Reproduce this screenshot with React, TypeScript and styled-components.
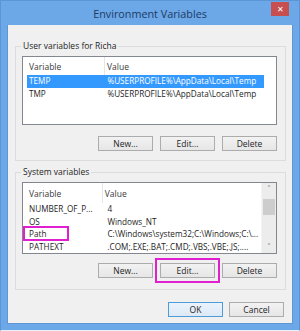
import React, { FC } from 'react';
import styled, { createGlobalStyle, css } from 'styled-components';

const GlobalStyle = createGlobalStyle`
	html, body {
		margin: 0;
		padding: 0;
		background: #6ca7e8;
	}
	body {
		font-family: 'Open Sans', 'Noto Sans', sans-serif;
		font-size: 8.5px;
		color: #1e1e1e;
	}
`;

type Row = { name: string; value: string; selected?: boolean; marked?: boolean };

const userVars: Row[] = [
	{ name: 'TEMP', value: '%USERPROFILE%\\AppData\\Local\\Temp', selected: true },
	{ name: 'TMP', value: '%USERPROFILE%\\AppData\\Local\\Temp' },
];

const systemVars: Row[] = [
	{ name: 'NUMBER_OF_P...', value: '4' },
	{ name: 'OS', value: 'Windows_NT' },
	{ name: 'Path', value: 'C:\\Windows\\system32;C:\\Windows;C:\\...', marked: true },
	{ name: 'PATHEXT', value: '.COM;.EXE;.BAT;.CMD;.VBS;.VBE;.JS;....' },
];

type ListProps = { rows: Row[]; height: number; headerHeight: number; rowHeight: number; scroll?: boolean };

const VarList: FC<ListProps> = ({ rows, height, headerHeight, rowHeight, scroll }) => (
	<ListBox style={{ height }}>
		<ListBody>
			<Header style={{ height: headerHeight }}>
				<HeadCell width={78}>Variable</HeadCell>
				<HeadCell width={163}>Value</HeadCell>
			</Header>
			{rows.map((row) => (
				<ListRow key={row.name} selected={row.selected} style={{ height: rowHeight, lineHeight: `${rowHeight}px` }}>
					<Cell width={77}>
						{row.name}
						{row.marked && <Mark />}
					</Cell>
					<Cell width={160}>{row.value}</Cell>
				</ListRow>
			))}
		</ListBody>
		{scroll && (
			<ScrollBar>
				<Arrow>˄</Arrow>
				<Track>
					<Thumb />
				</Track>
				<Arrow>˅</Arrow>
			</ScrollBar>
		)}
	</ListBox>
);

const App: FC = () => (
	<>
		<GlobalStyle />
		<Window>
			<TitleBar>
				<span />
				<Title>Environment Variables</Title>
				<CloseButton>✕</CloseButton>
			</TitleBar>
			<Client>
				<Group>
					<Legend>User variables for Richa</Legend>
					<VarList rows={userVars} height={69} headerHeight={18} rowHeight={12.5} />
					<ButtonRow>
						<Button>New...</Button>
						<Button>Edit...</Button>
						<Button>Delete</Button>
					</ButtonRow>
				</Group>
				<Group second>
					<Legend>System variables</Legend>
					<VarList rows={systemVars} height={72} headerHeight={20} rowHeight={12.7} scroll />
					<ButtonRow>
						<Button>New...</Button>
						<Button marked>Edit...</Button>
						<Button>Delete</Button>
					</ButtonRow>
				</Group>
				<Footer>
					<Button isDefault>OK</Button>
					<Button>Cancel</Button>
				</Footer>
			</Client>
		</Window>
	</>
);

const Window = styled.div`
	width: 300px;
	height: 331px;
	box-sizing: border-box;
	background: #6ca7e8;
	border: 1px solid #5b95d8;
	border-bottom-color: #e8f0fa;
	display: flex;
	flex-direction: column;
`;

const TitleBar = styled.div`
	height: 24px;
	display: grid;
	grid-template-columns: 1fr auto 1fr;
	align-items: start;
`;

const Title = styled.div`
	font-size: 10.8px;
	color: #1d3b63;
	line-height: 24px;
	padding-top: 1px;
`;

const CloseButton = styled.div`
	justify-self: end;
	width: 18px;
	height: 14px;
	margin: 1px 10px 0 0;
	background: #c74f4f;
	color: #fff;
	font-size: 8px;
	line-height: 14px;
	text-align: center;
`;

const Client = styled.div`
	margin: 0 6px;
	height: 299px;
	background: #f0f0f0;
	border: 1px solid #5f97d6;
	border-top: none;
	box-sizing: border-box;
	padding: 15px 6px 0 7px;
	display: flex;
	flex-direction: column;
`;

const Group = styled.fieldset<{ second?: boolean }>`
	margin: ${(p) => (p.second ? '5px' : '0')} 0 0 0;
	padding: 0 8px ${(p) => (p.second ? '11px' : '9px')} 6px;
	border: 1px solid #dcdcdc;
	min-width: 0;
	display: flex;
	flex-direction: column;
	gap: ${(p) => (p.second ? '9px' : '11px')};
`;

const Legend = styled.legend`
	padding: 0 2px;
	margin-left: -1px;
	line-height: 12px;
	height: 12px;
	margin-bottom: 4px;
`;

const ListBox = styled.div`
	box-sizing: border-box;
	border: 1px solid #828790;
	background: #fff;
	display: flex;
	overflow: hidden;
`;

const ListBody = styled.div`
	flex: 1;
	min-width: 0;
	padding-left: 4px;
	overflow: hidden;
`;

const Header = styled.div`
	display: flex;
	align-items: stretch;
`;

const HeadCell = styled.div<{ width: number }>`
	width: ${(p) => p.width}px;
	box-sizing: border-box;
	padding-left: 2px;
	display: flex;
	align-items: center;
	color: #3a3a3a;
	border-right: 1px solid #e5e5e5;
	&:last-child {
		border-right: none;
	}
`;

const ListRow = styled.div<{ selected?: boolean }>`
	display: flex;
	width: 237px;
	font-size: 8.2px;
	${(p) =>
		p.selected &&
		css`
			background: #3399ff;
			color: #fff;
		`}
`;

const Cell = styled.div<{ width: number }>`
	position: relative;
	width: ${(p) => p.width}px;
	padding-left: 2px;
	white-space: nowrap;
	&:last-child {
		padding-left: 3px;
	}
`;

const Mark = styled.span`
	position: absolute;
	left: -4px;
	top: -2px;
	width: 46px;
	height: 15px;
	box-sizing: border-box;
	border: 2px solid #e01fcf;
`;

const ScrollBar = styled.div`
	width: 14px;
	background: #ececec;
	border-left: 1px solid #f4f4f4;
	display: flex;
	flex-direction: column;
	align-items: center;
`;

const Arrow = styled.div`
	height: 12px;
	line-height: 12px;
	font-size: 9px;
	color: #555;
`;

const Track = styled.div`
	flex: 1;
	width: 100%;
	padding-top: 4px;
`;

const Thumb = styled.div`
	margin: 0 1px;
	height: 16px;
	background: #cdcdcd;
`;

const ButtonRow = styled.div`
	display: flex;
	justify-content: flex-end;
	gap: 7px;
`;

const Button = styled.div<{ marked?: boolean; isDefault?: boolean }>`
	width: 55px;
	height: 15px;
	box-sizing: border-box;
	border: 1px solid #acacac;
	background: linear-gradient(#f2f2f2, #e6e6e6);
	text-align: center;
	line-height: 13px;
	color: #1e1e1e;
	${(p) =>
		p.marked &&
		css`
			outline: 2px solid #e01fcf;
			outline-offset: 3px;
		`}
	${(p) =>
		p.isDefault &&
		css`
			border-color: #4f9ad8;
			background: linear-gradient(#eaf3fb, #dde9f5);
		`}
`;

const Footer = styled.div`
	display: flex;
	justify-content: flex-end;
	gap: 6px;
	margin-top: 12px;
	padding-right: 2px;
`;

export default App;
